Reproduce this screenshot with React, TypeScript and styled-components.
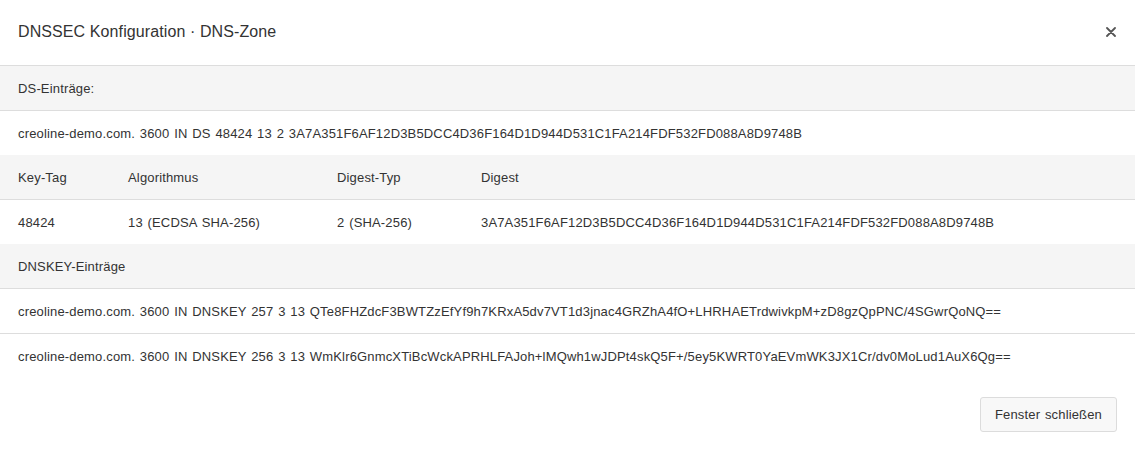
import React from 'react';
import styled, { createGlobalStyle } from 'styled-components';

const GlobalStyle = createGlobalStyle`
	* {
		box-sizing: border-box;
	}

	body {
		margin: 0;
		background: #ffffff;
		font-family: "Liberation Sans", Arial, sans-serif;
		color: #333333;
		letter-spacing: 0.16px;
		word-spacing: 1px;
	}
`;

const Modal = styled.div`
	width: 1135px;
	height: 451px;
	background: white;
	display: flex;
	flex-direction: column;
`;

const Header = styled.div`
	height: 66px;
	display: flex;
	align-items: center;
	justify-content: space-between;
	padding: 0 18px 2px 18px;
	border-bottom: 1px solid #dddddd;
`;

const Title = styled.h4`
	margin: 0;
	font-size: 16px;
	font-weight: 400;
	color: #333333;
	padding-top: 1px;
	letter-spacing: 0.1px;
	word-spacing: 0;
`;

const CloseButton = styled.button`
	border: 0;
	background: none;
	padding: 0;
	width: 12px;
	height: 12px;
	display: flex;
	align-items: center;
	justify-content: center;
	cursor: pointer;
`;

const Row = styled.div<{ $shaded?: boolean; $border?: boolean }>`
	height: ${p => (p.$border ? 45 : 44)}px;
	display: flex;
	align-items: center;
	padding: 0 18px;
	font-size: 13px;
	background: ${p => (p.$shaded ? '#f5f5f5' : 'white')};
	border-bottom: ${p => (p.$border ? '1px solid #dddddd' : '0')};
	white-space: nowrap;
`;

const GridRow = styled.div<{ $shaded?: boolean; $border?: boolean }>`
	height: ${p => (p.$border ? 45 : 44)}px;
	display: grid;
	grid-template-columns: 110px 209px 144px 1fr;
	align-items: center;
	font-size: 13px;
	background: ${p => (p.$shaded ? '#f5f5f5' : 'white')};
	border-bottom: ${p => (p.$border ? '1px solid #dddddd' : '0')};
	white-space: nowrap;
`;

const Cell = styled.div`
	padding-left: 18px;
`;

const Footer = styled.div`
	display: flex;
	justify-content: flex-end;
	padding: 19px 18px 0 18px;
`;

const Button = styled.button`
	height: 35px;
	padding: 0 14px;
	font-family: "Liberation Sans", Arial, sans-serif;
	font-size: 13px;
	letter-spacing: 0.16px;
	word-spacing: 1px;
	color: #333333;
	background: #f8f8f8;
	border: 1px solid #dcdcdc;
	border-radius: 3px;
	cursor: pointer;
`;

const dsRecord =
	'creoline-demo.com. 3600 IN DS 48424 13 2 3A7A351F6AF12D3B5DCC4D36F164D1D944D531C1FA214FDF532FD088A8D9748B';

const dnskeys = [
	'creoline-demo.com. 3600 IN DNSKEY 257 3 13 QTe8FHZdcF3BWTZzEfYf9h7KRxA5dv7VT1d3jnac4GRZhA4fO+LHRHAETrdwivkpM+zD8gzQpPNC/4SGwrQoNQ==',
	'creoline-demo.com. 3600 IN DNSKEY 256 3 13 WmKlr6GnmcXTiBcWckAPRHLFAJoh+lMQwh1wJDPt4skQ5F+/5ey5KWRT0YaEVmWK3JX1Cr/dv0MoLud1AuX6Qg=='
];

export default function App() {
	return (
		<>
			<GlobalStyle />
			<Modal>
				<Header>
					<Title>DNSSEC Konfiguration · DNS-Zone</Title>
					<CloseButton aria-label="Schließen">
						<svg width="10" height="10" viewBox="0 0 10 10">
							<path d="M1 1L9 9M9 1L1 9" stroke="#555" strokeWidth="1.8" strokeLinecap="round" />
						</svg>
					</CloseButton>
				</Header>

				<Row $shaded $border>DS-Einträge:</Row>
				<Row>{dsRecord}</Row>

				<GridRow $shaded $border>
					<Cell>Key-Tag</Cell>
					<Cell>Algorithmus</Cell>
					<Cell>Digest-Typ</Cell>
					<Cell>Digest</Cell>
				</GridRow>
				<GridRow>
					<Cell>48424</Cell>
					<Cell>13 (ECDSA SHA-256)</Cell>
					<Cell>2 (SHA-256)</Cell>
					<Cell>3A7A351F6AF12D3B5DCC4D36F164D1D944D531C1FA214FDF532FD088A8D9748B</Cell>
				</GridRow>

				<Row $shaded $border>DNSKEY-Einträge</Row>
				{dnskeys.map((key, index) => (
					<Row key={index} $border={index < dnskeys.length - 1}>
						{key}
					</Row>
				))}

				<Footer>
					<Button>Fenster schließen</Button>
				</Footer>
			</Modal>
		</>
	);
}
